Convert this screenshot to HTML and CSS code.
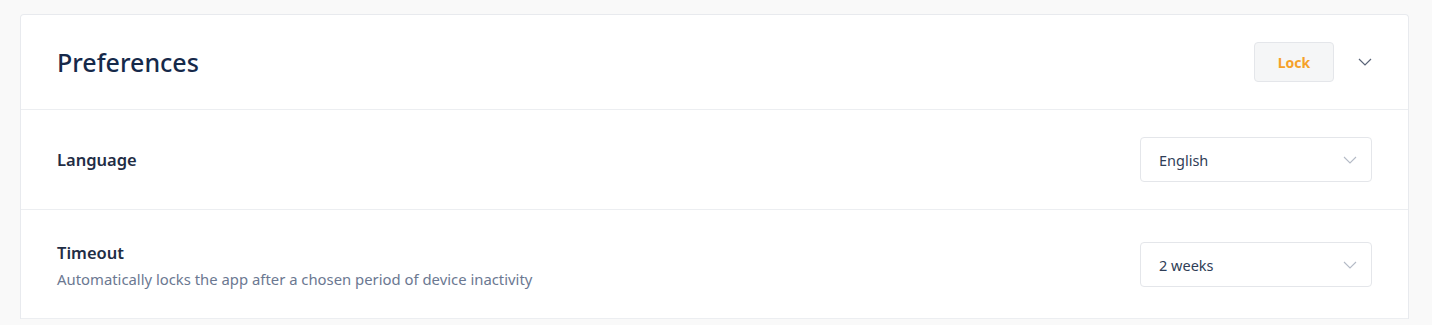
FILE: index.html
```html
<!DOCTYPE html>
<html>
<head>
<meta charset="utf-8">
<link rel="stylesheet" href="styles.css">
</head>
<body>
<div class="card">
  <div class="card-header">
    <h1 class="title">Preferences</h1>
    <div class="header-actions">
      <button class="lock-btn">Lock</button>
      <svg class="collapse" width="14" height="8" viewBox="0 0 14 8"><path d="M1 1l6 6 6-6" fill="none" stroke="#5a6478" stroke-width="1.2"/></svg>
    </div>
  </div>
  <div class="row row-lang">
    <div class="label-block">
      <div class="label">Language</div>
    </div>
    <div class="select">
      <span>English</span>
      <svg width="14" height="8" viewBox="0 0 14 8"><path d="M1 1l6 6 6-6" fill="none" stroke="#b4bac6" stroke-width="1.1"/></svg>
    </div>
  </div>
  <div class="row row-timeout">
    <div class="label-block">
      <div class="label">Timeout</div>
      <div class="desc">Automatically locks the app after a chosen period of device inactivity</div>
    </div>
    <div class="select">
      <span>2 weeks</span>
      <svg width="14" height="8" viewBox="0 0 14 8"><path d="M1 1l6 6 6-6" fill="none" stroke="#b4bac6" stroke-width="1.1"/></svg>
    </div>
  </div>
</div>
</body>
</html>
```
FILE: styles.css
```css
html, body {
  margin: 0;
  padding: 0;
  background: #f9f9f9;
  font-family: "Noto Sans", "Open Sans", sans-serif;
}
body {
  padding: 14px 23px 0 20px;
}
.card {
  background: #ffffff;
  border: 1px solid #e8eaee;
  border-bottom: none;
  border-radius: 4px 4px 0 0;
}
.card-header {
  height: 94px;
  display: flex;
  align-items: center;
  justify-content: space-between;
  padding: 0 36px;
  border-bottom: 1px solid #eceef1;
}
.title {
  margin: 0;
  font-size: 25px;
  font-weight: 500;
  color: #16294a;
}
.header-actions {
  display: flex;
  align-items: center;
  gap: 24px;
  margin-right: 0;
}
.lock-btn {
  width: 80px;
  height: 40px;
  background: #f5f6f7;
  border: 1px solid #e4e6ea;
  border-radius: 4px;
  color: #f5a12a;
  font-family: inherit;
  font-weight: 700;
  font-size: 14px;
}
.row {
  display: flex;
  align-items: center;
  justify-content: space-between;
  padding: 0 36px;
  border-bottom: 1px solid #eceef1;
}
.row-lang { height: 99px; }
.row-timeout { height: 108px; }
.label {
  font-size: 16.5px;
  font-weight: 600;
  color: #1f2d45;
}
.row-timeout .label-block { margin-top: 1px; }
.desc {
  margin-top: 5px;
  font-size: 14.85px;
  color: #6b7891;
}
.select {
  box-sizing: border-box;
  width: 232px;
  height: 45px;
  border: 1px solid #e4e6ea;
  border-radius: 4px;
  display: flex;
  align-items: center;
  justify-content: space-between;
  padding: 0 14px 0 18px;
  font-size: 14.5px;
  color: #2f3e57;
}
.row-timeout .select { margin-top: 1px; }
```
